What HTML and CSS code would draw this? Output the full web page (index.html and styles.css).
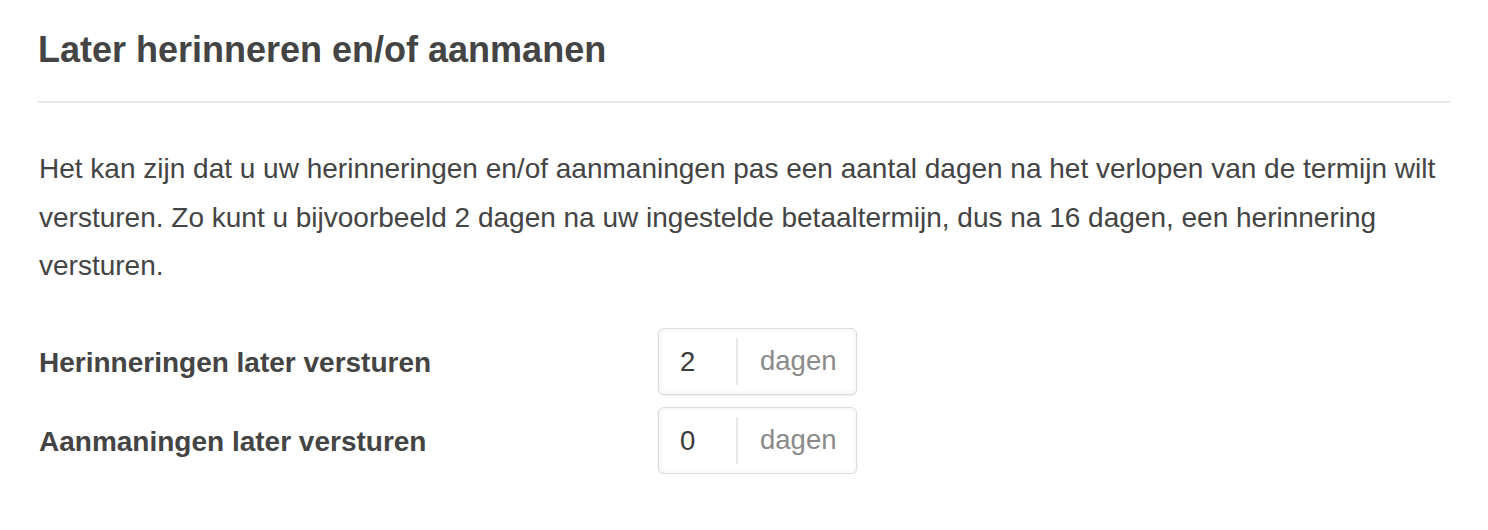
FILE: index.html
```html
<!DOCTYPE html>
<html lang="nl">
<head>
<meta charset="utf-8">
<title>Later herinneren en/of aanmanen</title>
<link rel="stylesheet" href="styles.css">
</head>
<body>
<section class="panel">
  <h2 class="title">Later herinneren en/of aanmanen</h2>
  <p class="intro">Het kan zijn dat u uw herinneringen en/of aanmaningen pas een aantal dagen na het verlopen van de termijn wilt versturen. Zo kunt u bijvoorbeeld 2 dagen na uw ingestelde betaaltermijn, dus na 16 dagen, een herinnering versturen.</p>
  <div class="form">
    <div class="row">
      <label class="label">Herinneringen later versturen</label>
      <div class="field"><span class="value">2</span><span class="unit">dagen</span></div>
    </div>
    <div class="row">
      <label class="label">Aanmaningen later versturen</label>
      <div class="field"><span class="value">0</span><span class="unit">dagen</span></div>
    </div>
  </div>
</section>
</body>
</html>
```
FILE: styles.css
```css
html, body {
  margin: 0;
  padding: 0;
  background: #fff;
}
body {
  font-family: "Liberation Sans", Arial, sans-serif;
  color: #444;
}
.panel {
  padding: 30px 38px 0 38px;
  width: 1412px;
}
.title {
  margin: 0;
  font-size: 36px;
  font-weight: bold;
  line-height: 40px;
  color: #444;
  padding-bottom: 31px;
  border-bottom: 2px solid #e6e6e6;
}
.intro {
  margin: 42px 0 0 1px;
  font-size: 28px;
  line-height: 48.5px;
  color: #444;
}
.form {
  margin-top: 37px;
  display: flex;
  flex-direction: column;
  gap: 12px;
}
.row {
  display: grid;
  grid-template-columns: 620px auto;
  align-items: center;
}
.label {
  font-size: 28px;
  font-weight: bold;
  color: #444;
  padding: 3px 0 0 1px;
}
.field {
  display: flex;
  align-items: center;
  width: 197px;
  height: 65px;
  border: 1px solid #dcdcdc;
  border-radius: 6px;
  box-shadow: 0 1px 2px rgba(0,0,0,0.09), inset 0 0 0 3px #fafafa;
  background: #fff;
}
.value {
  width: 79px;
  box-sizing: border-box;
  padding-left: 21px;
  font-size: 27.5px;
  color: #3a3a3a;
  border-right: 2px solid #e8e8e8;
  line-height: 47px;
}
.unit {
  padding-left: 22px;
  font-size: 27.5px;
  color: #8a8a8a;
}
```
